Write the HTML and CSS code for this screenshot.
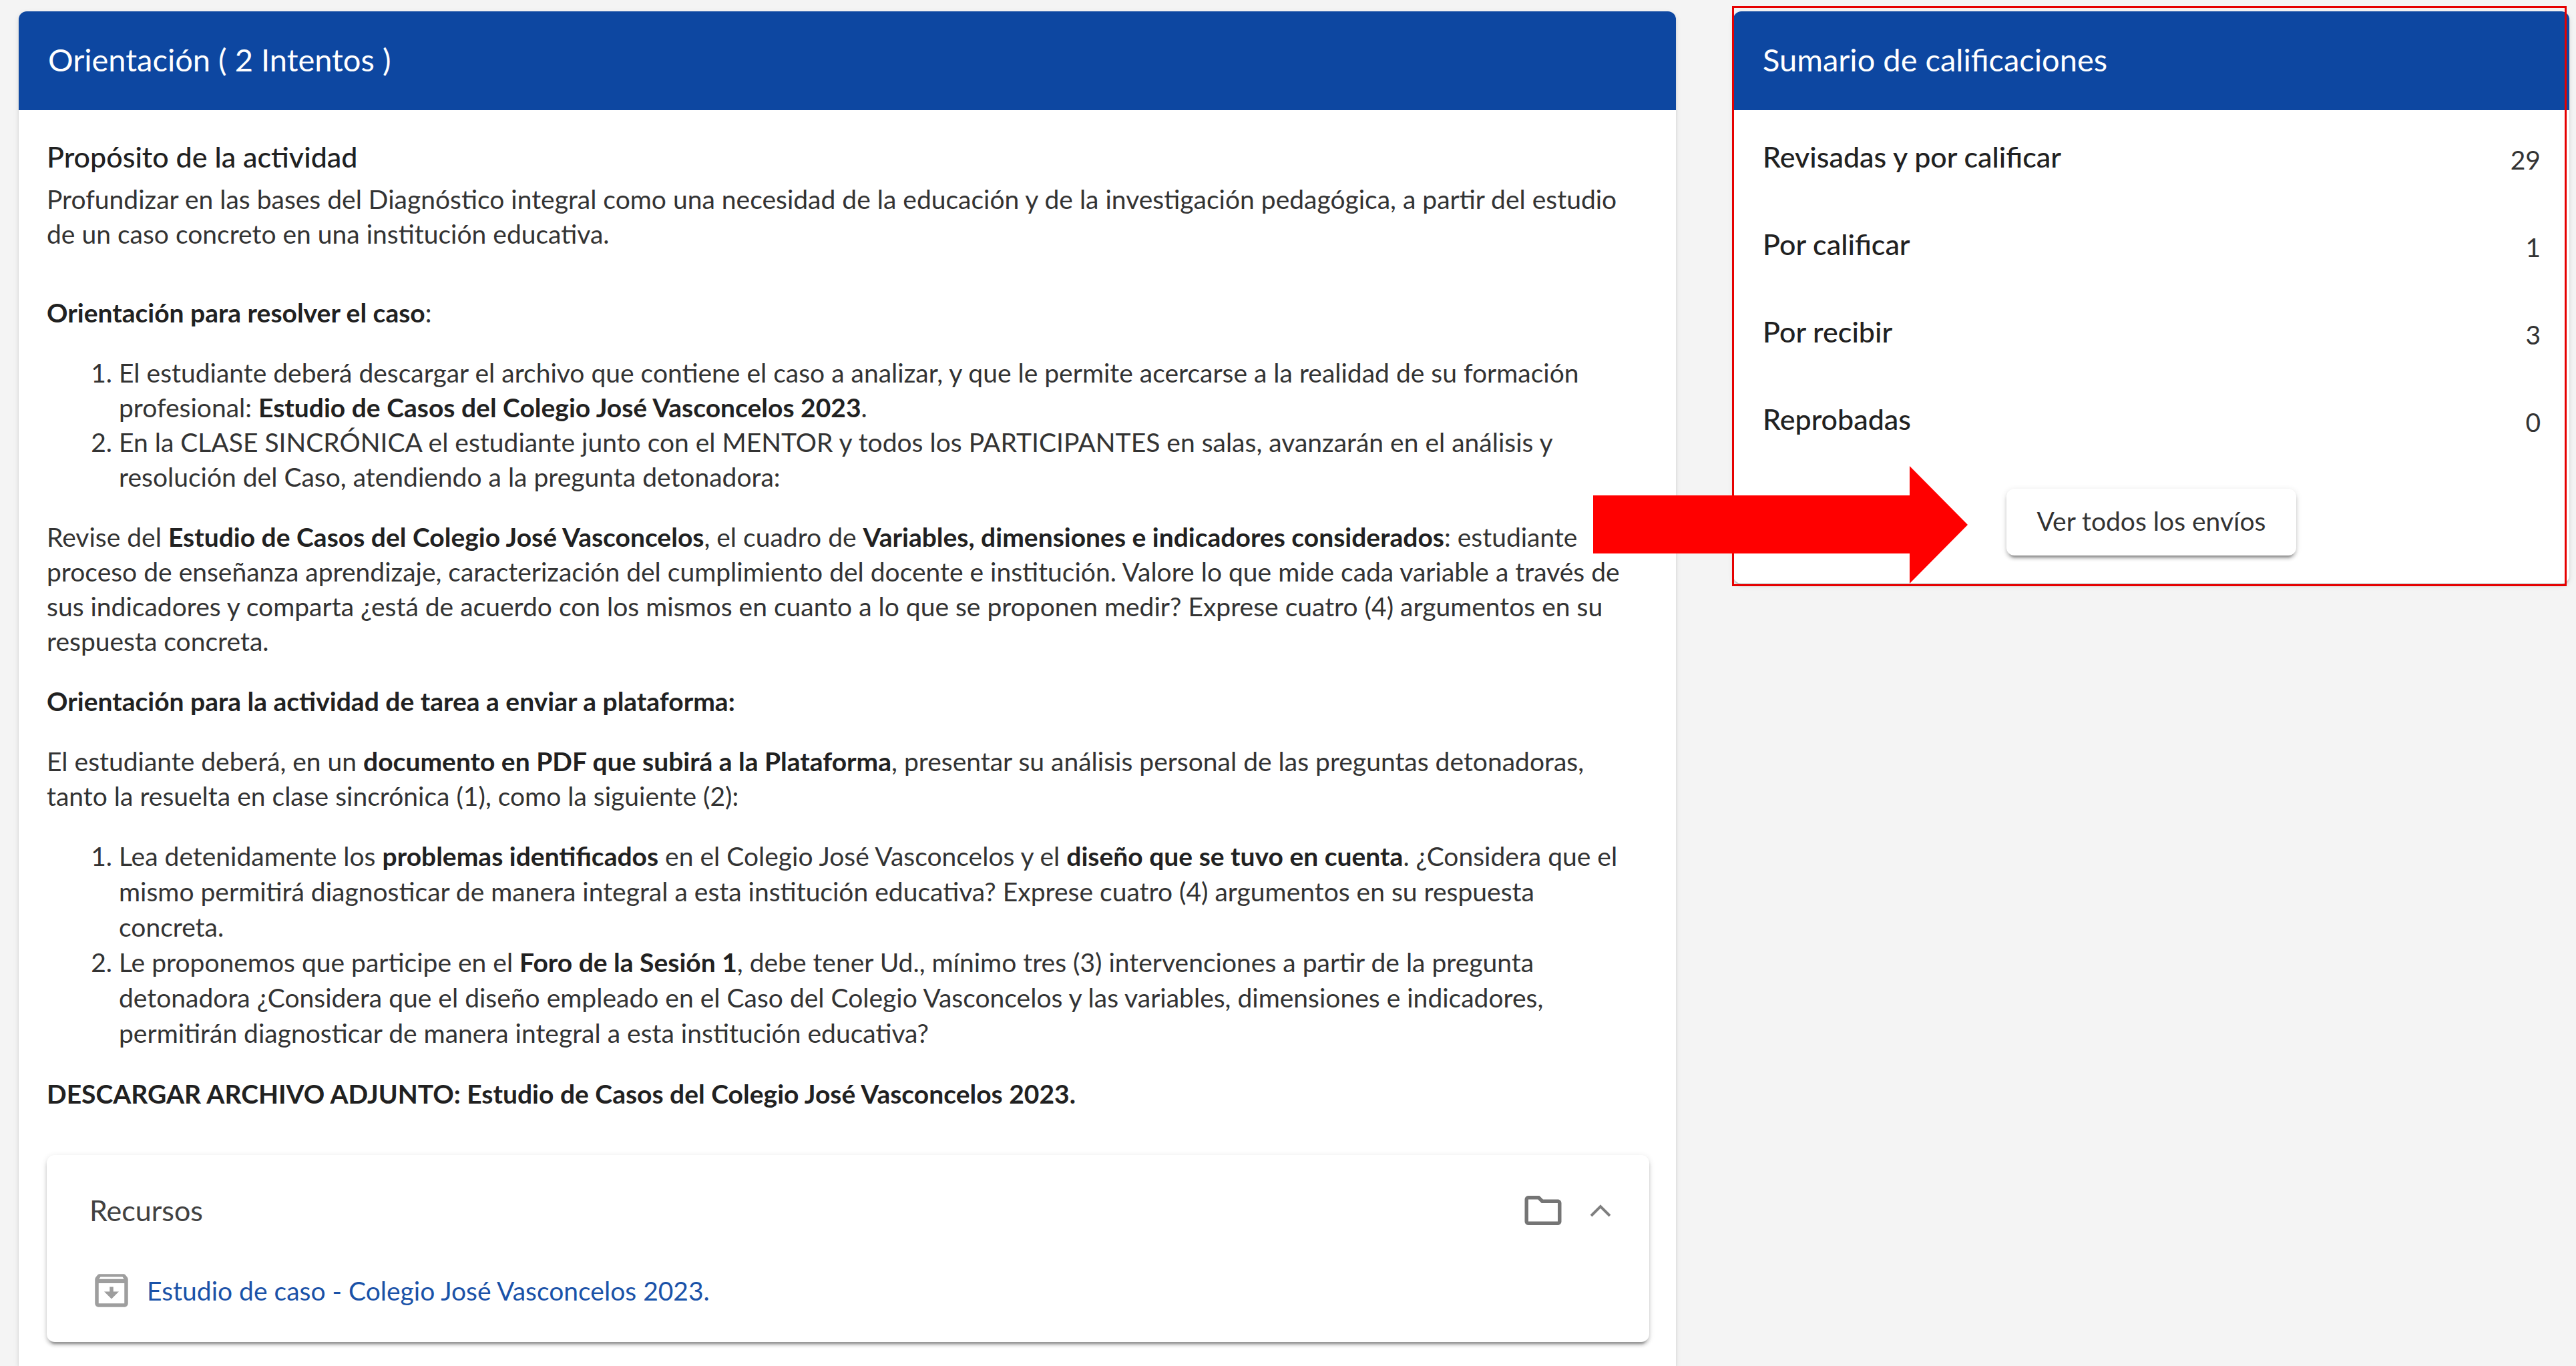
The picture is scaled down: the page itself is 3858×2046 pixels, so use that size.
FILE: index.html
```html
<!DOCTYPE html>
<html lang="es">
<head>
<meta charset="utf-8">
<meta name="viewport" content="width=device-width, initial-scale=1">
<title>Orientación</title>
<link rel="stylesheet" href="styles.css">
</head>
<body>
<main class="page">
  <article class="card activity">
    <header class="card-header"><h1 class="card-title">Orientación ( 2 Intentos )</h1></header>
    <div class="card-body">
      <h2 class="subtitle">Propósito de la actividad</h2>
      <p class="purpose">Profundizar en las bases del Diagnóstico integral como una necesidad de la educación y de la investigación pedagógica, a partir del estudio<br>de un caso concreto en una institución educativa.</p>
      <div class="prose">
        <p><strong>Orientación para resolver el caso</strong>:</p>
        <ol>
          <li>El estudiante deberá descargar el archivo que contiene el caso a analizar, y que le permite acercarse a la realidad de su formación<br>profesional: <strong>Estudio de Casos del Colegio José Vasconcelos 2023</strong>.</li>
          <li>En la CLASE SINCRÓNICA el estudiante junto con el MENTOR y todos los PARTICIPANTES en salas, avanzarán en el análisis y<br>resolución del Caso, atendiendo a la pregunta detonadora:</li>
        </ol>
        <p>Revise del <strong>Estudio de Casos del Colegio José Vasconcelos</strong>, el cuadro de <strong>Variables, dimensiones e indicadores considerados</strong>: estudiante<br>proceso de enseñanza aprendizaje, caracterización del cumplimiento del docente e institución. Valore lo que mide cada variable a través de<br>sus indicadores y comparta ¿está de acuerdo con los mismos en cuanto a lo que se proponen medir? Exprese cuatro (4) argumentos en su<br>respuesta concreta.</p>
        <p><strong>Orientación para la actividad de tarea a enviar a plataforma:</strong></p>
        <p>El estudiante deberá, en un <strong>documento en PDF que subirá a la Plataforma</strong>, presentar su análisis personal de las preguntas detonadoras,<br>tanto la resuelta en clase sincrónica (1), como la siguiente (2):</p>
        <ol class="loose">
          <li>Lea detenidamente los <strong>problemas identificados</strong> en el Colegio José Vasconcelos y el <strong>diseño que se tuvo en cuenta</strong>. ¿Considera que el<br>mismo permitirá diagnosticar de manera integral a esta institución educativa? Exprese cuatro (4) argumentos en su respuesta<br>concreta.</li>
          <li>Le proponemos que participe en el <strong>Foro de la Sesión 1</strong>, debe tener Ud., mínimo tres (3) intervenciones a partir de la pregunta<br>detonadora ¿Considera que el diseño empleado en el Caso del Colegio Vasconcelos y las variables, dimensiones e indicadores,<br>permitirán diagnosticar de manera integral a esta institución educativa?</li>
        </ol>
        <p><strong>DESCARGAR ARCHIVO ADJUNTO: Estudio de Casos del Colegio José Vasconcelos 2023.</strong></p>
      </div>
      <section class="resources">
        <button class="resources-toggle" type="button" aria-expanded="true">
          <span class="resources-name">Recursos</span>
          <svg class="icon folder" viewBox="0 0 24 24" aria-hidden="true"><path d="M9.17 6l2 2H20v10H4V6h5.17M10 4H4c-1.1 0-1.99.9-1.99 2L2 18c0 1.1.9 2 2 2h16c1.1 0 2-.9 2-2V8c0-1.100-.9-2-2-2h-8l-2-2z"/></svg>
          <svg class="chevron" viewBox="0 0 34 20" aria-hidden="true"><path d="M3 18L17 4l14 14"/></svg>
        </button>
        <div class="resource">
          <svg class="icon archive" viewBox="0 0 24 24" aria-hidden="true"><path fill-rule="evenodd" d="M5.500 3h13c.5 0 .9.200 1.200.6l.8 1c.3.400.5.900.5 1.400v13c0 1.100-.9 2-2 2H5c-1.100 0-2-.9-2-2V6c0-.5.200-1 .5-1.400l.8-1c.3-.4.700-.6 1.200-.6zM6 4.500l-.8 1.200h13.600L18 4.500zM5 8v11h14V8zM11 10h2v2.500h3l-4 4-4-4h3z"/></svg>
          <a href="#">Estudio de caso - Colegio José Vasconcelos 2023.</a>
        </div>
      </section>
    </div>
  </article>

  <aside class="card summary">
    <header class="card-header"><h2 class="card-title">Sumario de calificaciones</h2></header>
    <dl class="totals">
      <div class="total"><dt>Revisadas y por calificar</dt><dd>29</dd></div>
      <div class="total"><dt>Por calificar</dt><dd>1</dd></div>
      <div class="total"><dt>Por recibir</dt><dd>3</dd></div>
      <div class="total"><dt>Reprobadas</dt><dd>0</dd></div>
    </dl>
    <button class="all-button" type="button">Ver todos los envíos</button>
    <div class="highlight"></div>
    <svg class="arrow" viewBox="0 0 561 176" aria-hidden="true"><path d="M0 44h474V0l87 88-87 88v-45H0z"/></svg>
  </aside>
</main>
</body>
</html>
```
FILE: styles.css
```css
* {
  box-sizing: border-box;
}

body {
  margin: 0;
  background: #f4f4f4;
  color: #333;
  font: 39px/52px Lato, "Open Sans", sans-serif;
}

h1, h2, p, ol, dl, dd {
  margin: 0;
}

.page {
  display: grid;
  grid-template-columns: 2482fr 1252fr;
  align-items: start;
  gap: 86px;
  min-height: 100vh;
  padding: 17px 10px 0 28px;
}

.card {
  position: relative;
  min-width: 0;
  border-radius: 12px;
  background: #fff;
  box-shadow: 0 5px 3px -3px rgba(0, 0, 0, .2), 0 3px 3px rgba(0, 0, 0, .1), 0 3px 8px rgba(0, 0, 0, .1);
}

.activity {
  align-self: stretch;
  border-radius: 12px 12px 0 0;
}

.card-header {
  padding: 42px 44px 46px;
  border-radius: 12px 12px 0 0;
  background: #0d47a1;
  color: #fff;
}

.card-title {
  font-size: 47px;
  font-weight: 400;
  line-height: 60px;
}

.card-body {
  padding: 44px 40px 20px 42px;
}

.subtitle {
  color: #212121;
  font-size: 43px;
  font-weight: 500;
  line-height: 52px;
}

.purpose {
  margin: 11px 0 66px;
}

.prose {
  display: flex;
  flex-direction: column;
  gap: 38px;
}

.prose ol {
  padding-left: 108px;
}

.loose {
  line-height: 53px;
}

strong {
  color: #212121;
  font-weight: 700;
}

.resources {
  margin-top: 66px;
  border-radius: 12px;
  background: #fff;
  box-shadow: 0 8px 3px -5px rgba(0, 0, 0, .25), 0 5px 5px rgba(0, 0, 0, .16), 0 2px 10px rgba(0, 0, 0, .12);
}

.resources-toggle {
  display: flex;
  align-items: center;
  width: 100%;
  padding: 50px 56px 50px 64px;
  border: 0;
  background: none;
  color: #424242;
  font: inherit;
  font-size: 43px;
  text-align: left;
}

.resources-name {
  flex: 1;
}

.icon {
  flex: none;
  width: 66px;
  height: 66px;
}

.folder {
  fill: #757575;
}

.chevron {
  width: 34px;
  height: 20px;
  margin-left: 36px;
  fill: none;
  stroke: #808080;
  stroke-width: 4;
}

.resource {
  display: flex;
  align-items: center;
  gap: 20px;
  padding: 4px 64px 44px;
}

.archive {
  fill: #9e9e9e;
}

a {
  color: #1a52a8;
  text-decoration: none;
}

.totals {
  padding: 4px 43px 39px 44px;
}

.total {
  display: flex;
  align-items: center;
  justify-content: space-between;
  height: 131px;
}

.total dt {
  color: #212121;
  font-size: 43px;
  font-weight: 500;
}

.total dd {
  padding-top: 8px;
}

.all-button {
  display: block;
  height: 100px;
  margin: 0 auto;
  padding: 0 46px 4px;
  border: 0;
  border-radius: 12px;
  background: #fff;
  box-shadow: 0 8px 3px -5px rgba(0, 0, 0, .25), 0 5px 5px rgba(0, 0, 0, .16), 0 2px 10px rgba(0, 0, 0, .12);
  color: #333;
  font: inherit;
}

.summary {
  padding-bottom: 42px;
}

.highlight {
  position: absolute;
  inset: -8px 4px -4px -2px;
  border: 3px solid #e60000;
  pointer-events: none;
}

.arrow {
  position: absolute;
  top: 681px;
  left: -210px;
  width: 561px;
  height: 176px;
  fill: #f00;
  pointer-events: none;
}
```
